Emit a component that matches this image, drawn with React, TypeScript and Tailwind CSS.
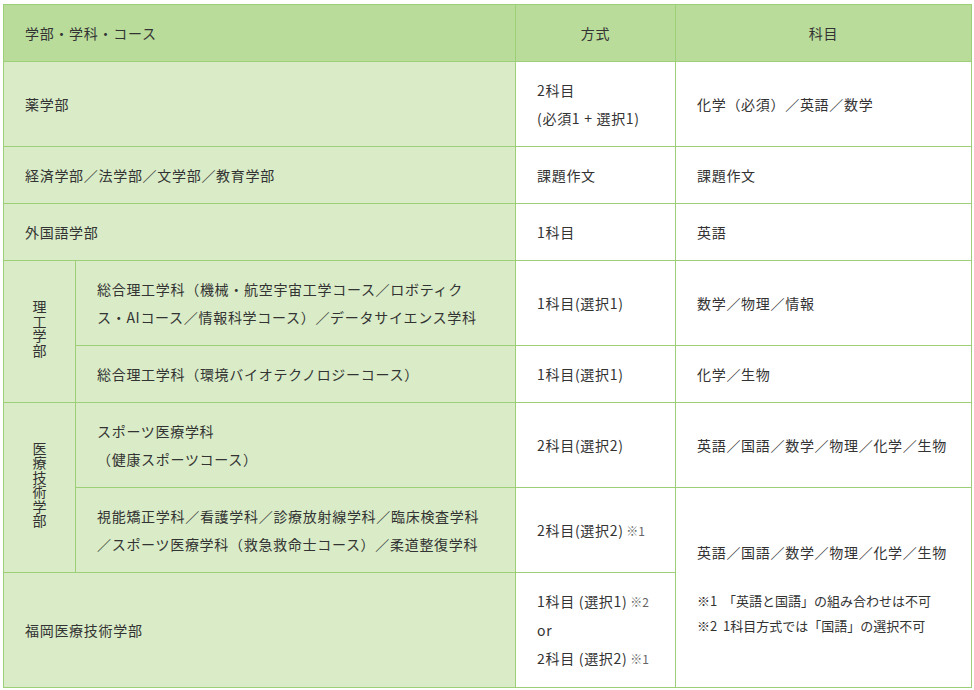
import React from 'react';

const td = 'border border-[#9ccf78] px-[21px] py-[14px] align-middle';
const side = td + ' bg-[#d9ecc7]';
const main = td + ' bg-white';
const vert = 'inline-block w-[1em] break-all leading-[14.4px] tracking-normal';

function Note({ children }: { children: React.ReactNode }) {
  return <span className="text-[12px] text-[#666] tracking-normal"> {children}</span>;
}

export default function App() {
  return (
    <div className="min-h-screen bg-white pl-[3px] pt-[4px]" style={{ fontFamily: '"Noto Sans CJK JP", "Noto Sans", sans-serif' }}>
      <table className="table-fixed border-collapse w-[968px] text-[14px] leading-[28px] tracking-[0.05em] text-[#333]">
        <colgroup>
          <col className="w-[72px]" />
          <col className="w-[440px]" />
          <col className="w-[160px]" />
          <col className="w-[296px]" />
        </colgroup>
        <thead>
          <tr className="bg-[#b9dc9b]">
            <th colSpan={2} className={td + ' text-left font-normal'}>学部・学科・コース</th>
            <th className={td + ' text-center font-normal'}>方式</th>
            <th className={td + ' text-center font-normal'}>科目</th>
          </tr>
        </thead>
        <tbody>
          <tr>
            <td colSpan={2} className={side}>薬学部</td>
            <td className={main}>2科目<br />(必須1 + 選択1)</td>
            <td className={main}>化学（必須）／英語／数学</td>
          </tr>
          <tr>
            <td colSpan={2} className={side}>経済学部／法学部／文学部／教育学部</td>
            <td className={main}>課題作文</td>
            <td className={main}>課題作文</td>
          </tr>
          <tr>
            <td colSpan={2} className={side}>外国語学部</td>
            <td className={main}>1科目</td>
            <td className={main}>英語</td>
          </tr>
          <tr>
            <td rowSpan={2} className="border border-[#9ccf78] bg-[#d9ecc7] text-center align-middle">
              <span className={vert}>理工学部</span>
            </td>
            <td className={side}>総合理工学科（機械・航空宇宙工学コース／ロボティク<br />ス・AIコース／情報科学コース）／データサイエンス学科</td>
            <td className={main}>1科目(選択1)</td>
            <td className={main}>数学／物理／情報</td>
          </tr>
          <tr>
            <td className={side}>総合理工学科（環境バイオテクノロジーコース）</td>
            <td className={main}>1科目(選択1)</td>
            <td className={main}>化学／生物</td>
          </tr>
          <tr>
            <td rowSpan={2} className="border border-[#9ccf78] bg-[#d9ecc7] text-center align-middle">
              <span className={vert}>医療技術学部</span>
            </td>
            <td className={side}>スポーツ医療学科<br />（健康スポーツコース）</td>
            <td className={main}>2科目(選択2)</td>
            <td className={main}>英語／国語／数学／物理／化学／生物</td>
          </tr>
          <tr>
            <td className={side}>視能矯正学科／看護学科／診療放射線学科／臨床検査学科<br />／スポーツ医療学科（救急救命士コース）／柔道整復学科</td>
            <td className={main}>2科目(選択2)<Note>※1</Note></td>
            <td rowSpan={2} className={main}>
              <div>英語／国語／数学／物理／化学／生物</div>
              <div className="mt-[22px] text-[13px] leading-[25px] tracking-normal">
                <div>※1 &nbsp;「英語と国語」の組み合わせは不可</div>
                <div>※2 &nbsp;1科目方式では「国語」の選択不可</div>
              </div>
            </td>
          </tr>
          <tr>
            <td colSpan={2} className={side}>福岡医療技術学部</td>
            <td className={main}>
              1科目 (選択1)<Note>※2</Note><br />or<br />2科目 (選択2)<Note>※1</Note>
            </td>
          </tr>
        </tbody>
      </table>
    </div>
  );
}
